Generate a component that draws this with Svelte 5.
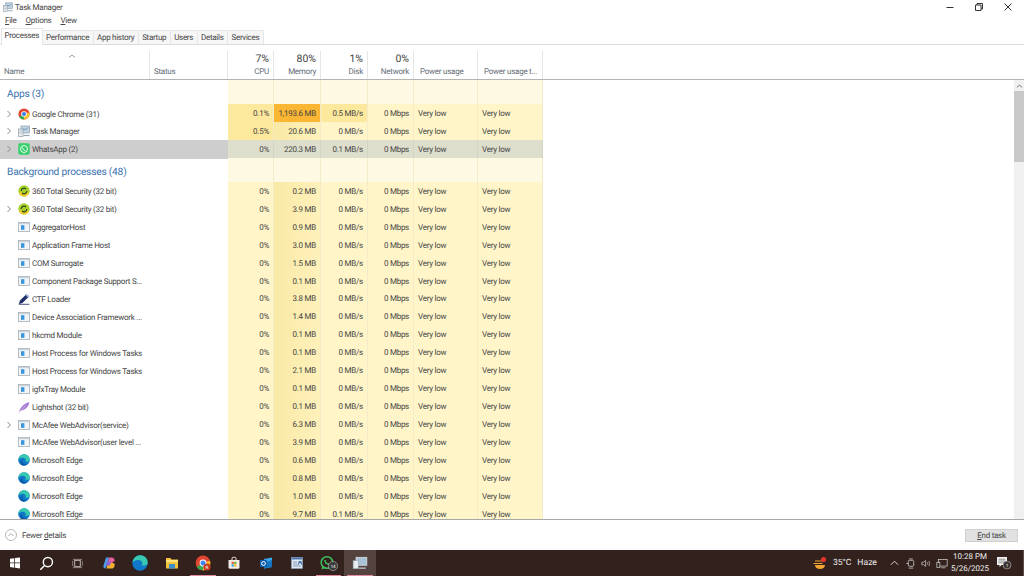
<script>
  const tabs = ["Processes", "Performance", "App history", "Startup", "Users", "Details", "Services"];

  const apps = [
    { name: "Google Chrome (31)", icon: "chrome", arrow: true, cpu: "0.1%", mem: "1,193.6 MB", disk: "0.5 MB/s", cpuHot: true, memHeat: "hot", diskHot: true },
    { name: "Task Manager", icon: "taskmgr", arrow: true, cpu: "0.5%", mem: "20.6 MB", disk: "0 MB/s", cpuHot: true },
    { name: "WhatsApp (2)", icon: "whatsapp", arrow: true, cpu: "0%", mem: "220.3 MB", disk: "0.1 MB/s", selected: true }
  ];

  const background = [
    { name: "360 Total Security (32 bit)", icon: "s360", mem: "0.2 MB" },
    { name: "360 Total Security (32 bit)", icon: "s360", arrow: true, mem: "3.9 MB" },
    { name: "AggregatorHost", icon: "win", mem: "0.9 MB" },
    { name: "Application Frame Host", icon: "win", mem: "3.0 MB" },
    { name: "COM Surrogate", icon: "win", mem: "1.5 MB" },
    { name: "Component Package Support S...", icon: "win", mem: "0.1 MB" },
    { name: "CTF Loader", icon: "ctf", mem: "3.8 MB" },
    { name: "Device Association Framework ...", icon: "win", mem: "1.4 MB" },
    { name: "hkcmd Module", icon: "win", mem: "0.1 MB" },
    { name: "Host Process for Windows Tasks", icon: "win", mem: "0.1 MB" },
    { name: "Host Process for Windows Tasks", icon: "win", mem: "2.1 MB" },
    { name: "igfxTray Module", icon: "win", mem: "0.1 MB" },
    { name: "Lightshot (32 bit)", icon: "lightshot", mem: "0.1 MB" },
    { name: "McAfee WebAdvisor(service)", icon: "win", arrow: true, mem: "6.3 MB" },
    { name: "McAfee WebAdvisor(user level ...", icon: "win", mem: "3.9 MB" },
    { name: "Microsoft Edge", icon: "edge", mem: "0.6 MB" },
    { name: "Microsoft Edge", icon: "edge", mem: "0.8 MB" },
    { name: "Microsoft Edge", icon: "edge", mem: "1.0 MB" },
    { name: "Microsoft Edge", icon: "edge", mem: "9.7 MB", disk: "0.1 MB/s" }
  ];
</script>

{#snippet rowIcon(kind)}
  <svg class="icon" viewBox="0 0 12 12">
    {#if kind === "chrome"}
      <circle cx="6" cy="6" r="5.6" fill="#e0452f" />
      <path d="M6 6 1.1 8.8A5.6 5.6 0 0 0 6 11.6L8.8 6.8Z" fill="#34a853" />
      <path d="M6 6 11.3 4.3A5.6 5.6 0 0 1 6 11.6Z" fill="#f6c22d" />
      <circle cx="6" cy="6" r="2.8" fill="#fff" />
      <circle cx="6" cy="6" r="2.1" fill="#3f7fe8" />
    {:else if kind === "taskmgr"}
      <rect x="3" y="1" width="8.5" height="7" fill="#c2d3e0" stroke="#8a9bab" stroke-width=".7" />
      <path d="M4 6 6 3.5 7.5 5 10 2.5" fill="none" stroke="#4f87b3" stroke-width=".8" />
      <rect x=".5" y="4" width="4.5" height="7.5" fill="#e8ecf0" stroke="#8f9ba5" stroke-width=".7" />
      <path d="M1.5 6h2.5M1.5 8h2.5" stroke="#8f9ba5" stroke-width=".6" />
      <path d="M5.5 10.5h6" stroke="#9aa5ae" stroke-width="1.2" />
    {:else if kind === "whatsapp"}
      <rect x=".3" y=".3" width="11.4" height="11.4" rx="1.6" fill="#35d06a" />
      <circle cx="6" cy="6" r="3.5" fill="none" stroke="#fff" stroke-width=".9" />
      <path d="M4.6 4.5c0 1.700 1.100 2.800 2.800 3" fill="none" stroke="#fff" stroke-width="1" />
    {:else if kind === "s360"}
      <circle cx="6" cy="6" r="5.7" fill="#a8cf2c" />
      <path d="M1 8A5.5 5.5 0 0 0 11 8.2L8 6.5 6 9.5 3.5 7Z" fill="#f4cc2f" />
      <path d="M3.2 6a2.8 2.8 0 0 1 4.800-2M8.800 6A2.8 2.8 0 0 1 4 8" fill="none" stroke="#26481c" stroke-width="1.1" />
    {:else if kind === "win"}
      <rect x=".4" y="1.4" width="11.2" height="9.2" fill="#f2f5f8" stroke="#a5aeb6" stroke-width=".8" />
      <rect x="1" y="2" width="10" height="1.2" fill="#c9d2da" />
      <rect x="3" y="4.2" width="3.4" height="4.6" fill="#3a96dc" />
    {:else if kind === "ctf"}
      <path d="M.8 11 2 7.6 8.6 1 11 3.4 4.4 10Z" fill="#1f2f6c" />
      <path d="M8.6 1 11 3.4 9.9 4.5 7.5 2.1Z" fill="#a9c3e6" />
      <path d="M.8 11.3h10.6" stroke="#1c2a5c" stroke-width=".8" />
    {:else if kind === "lightshot"}
      <path d="M1 11.500C2 6.500 5.500 2.500 11.400 1 10.800 6 7 9.300 3 9.500Z" fill="#a97fd8" />
      <path d="M1 11.500 7.600 4.600" stroke="#e6d9f4" stroke-width=".5" />
    {:else if kind === "edge"}
      <circle cx="6" cy="6" r="5.8" fill="#0f78c8" />
      <path d="M.4 5.400C1.200 2 3.600.2 6.200.2c3 0 5.500 2.200 5.600 5.400.1 1.400-1.100 2.200-2.600 2.200H7c.9-.6 1.100-1.700.4-2.700C6.100 3.400 2.900 3.300.4 5.400Z" fill="#37c9b0" />
      <path d="M4.200 6.800c0 2.200 2 3.900 4.800 3.400-1 1-2.500 1.600-3.800 1.400C3.300 11.300 1.900 9.700 2.100 7.900c.3-1 1.200-2 2.100-1.100Z" fill="#0d5ca8" />
    {/if}
  </svg>
{/snippet}

{#snippet row(r)}
  <div class="row" class:selected={r.selected}>
    <div class="name">
      <span class="arrow">{#if r.arrow}<svg viewBox="0 0 6 8"><path d="M1.500 1 4.500 4 1.500 7" fill="none" stroke="#8a8a8a" /></svg>{/if}</span>
      {@render rowIcon(r.icon)}
      <span class="label">{r.name}</span>
    </div>
    <div class="status"></div>
    <div class="cell num" class:warm={r.cpuHot}>{r.cpu ?? "0%"}</div>
    <div class="cell num mem" class:hot={r.memHeat === "hot"}>{r.mem}</div>
    <div class="cell num" class:warm={r.diskHot}>{r.disk ?? "0 MB/s"}</div>
    <div class="cell num">0 Mbps</div>
    <div class="cell text">Very low</div>
    <div class="cell text">Very low</div>
  </div>
{/snippet}

{#snippet groupRow(title)}
  <div class="row group">
    <div class="group-title">{title}</div>
    <div class="status"></div>
    <div class="cell"></div><div class="cell"></div><div class="cell"></div>
    <div class="cell"></div><div class="cell"></div><div class="cell"></div>
  </div>
{/snippet}

<div class="window">
  <div class="titlebar">
    <div class="title">{@render rowIcon("taskmgr")}<span>Task Manager</span></div>
    <div class="controls">
      <svg viewBox="0 0 10 10"><path d="M1.500 5.500h7" stroke="#333" /></svg>
      <svg viewBox="0 0 10 10"><path d="M1.500 3h5.500v5.500h-5.500zM3 3V1.500h5.500V7H7" fill="none" stroke="#333" /></svg>
      <svg viewBox="0 0 10 10"><path d="M1.500 1.500l7 7M8.500 1.500l-7 7" stroke="#333" /></svg>
    </div>
  </div>

  <div class="menu">
    <span><u>F</u>ile</span>
    <span><u>O</u>ptions</span>
    <span><u>V</u>iew</span>
  </div>

  <div class="tabs">
    {#each tabs as tab, i}
      <div class="tab" class:active={i === 0}>{tab}</div>
    {/each}
  </div>

  <div class="head">
    <div class="hcol name-col">
      <svg class="sort" viewBox="0 0 8 4"><path d="M1 3.500 4 1 7 3.500" fill="none" stroke="#999" /></svg>
      <span class="hlabel">Name</span>
    </div>
    <div class="hcol"><span class="hlabel">Status</span></div>
    <div class="hcol right"><span class="pct">7%</span><span class="hlabel">CPU</span></div>
    <div class="hcol right"><span class="pct">80%</span><span class="hlabel">Memory</span></div>
    <div class="hcol right"><span class="pct">1%</span><span class="hlabel">Disk</span></div>
    <div class="hcol right"><span class="pct">0%</span><span class="hlabel">Network</span></div>
    <div class="hcol power"><span class="hlabel">Power usage</span></div>
    <div class="hcol power"><span class="hlabel">Power usage t...</span></div>
  </div>

  <div class="body">
    <div class="rows">
      {@render groupRow("Apps (3)")}
      {#each apps as r}{@render row(r)}{/each}
      {@render groupRow("Background processes (48)")}
      {#each background as r}{@render row(r)}{/each}
    </div>
    <div class="scrollbar">
      <svg viewBox="0 0 8 4"><path d="M1 3.500 4 1 7 3.500" fill="none" stroke="#666" /></svg>
      <div class="thumb"></div>
    </div>
  </div>

  <div class="footer">
    <div class="fewer">
      <svg viewBox="0 0 12 12"><circle cx="6" cy="6" r="5.500" fill="none" stroke="#9a9a9a" stroke-width=".7" /><path d="M3.500 7 6 4.500 8.500 7" fill="none" stroke="#888" stroke-width=".7" /></svg>
      <span>Fewer <u>d</u>etails</span>
    </div>
    <div class="endtask"><u>E</u>nd task</div>
  </div>

  <div class="taskbar">
    <div class="tb-left">
      <div class="slot"><svg class="start" viewBox="0 0 12 12"><path d="M1 1.800 5.300 1.200V5.600H1ZM6 1.100 11 .4V5.600H6ZM1 6.300H5.300V10.700L1 10.100ZM6 6.300H11V11.500L6 10.800Z" fill="#fff" /></svg></div>
      <div class="slot"><svg class="search" viewBox="0 0 14 14"><circle cx="8.300" cy="5.700" r="4.300" fill="none" stroke="#fff" stroke-width="1.300" /><path d="M5.200 8.800 1.200 12.800" stroke="#fff" stroke-width="1.400" /></svg></div>
      <div class="slot"><svg class="view" viewBox="0 0 12 12"><rect x="3" y="2.500" width="6" height="7" fill="none" stroke="#d8d4d2" stroke-width=".9" /><path d="M1 1.500h10M1 10.500h10M.8 3v6M11.200 3v6" stroke="#a8a3a0" stroke-width=".8" /></svg></div>
      <div class="slot"><svg class="app" viewBox="0 0 14 14">
        <path d="M4 1.500h3L6 7 3.500 12.500C1.500 12.500 1 11 1.500 9.500Z" fill="#4b9be8" />
        <path d="M7 1.500h3c1.500 0 2.500 1.500 2.800 3L10 7H6Z" fill="#e85f9f" />
        <path d="M6 7h4.500l2 .5c.5 2.500-.5 5-2.500 5H6.500L4.500 12.500Z" fill="#f4b02e" />
        <path d="M5 5.500h4l-1 4H4Z" fill="#8f63d6" />
      </svg></div>
      <div class="slot"><svg class="app big" viewBox="0 0 12 12">
        <circle cx="6" cy="6" r="5.800" fill="#0f78c8" />
        <path d="M.4 5.400C1.200 2 3.600.2 6.200.2c3 0 5.500 2.200 5.600 5.400.1 1.400-1.100 2.200-2.600 2.200H7c.9-.6 1.100-1.700.4-2.700C6.100 3.400 2.900 3.300.4 5.400Z" fill="#37c9b0" />
      </svg></div>
      <div class="slot"><svg class="app" viewBox="0 0 14 14"><path d="M1 2h4.500l1 1.500H13v9H1Z" fill="#f3c33d" /><rect x="1" y="4" width="12" height="2" fill="#ffe37d" /><rect x="4" y="8" width="6" height="4.500" fill="#3b8fc9" /></svg></div>
      <div class="slot running">
        <svg class="app big" viewBox="0 0 16 16">
          <circle cx="8" cy="8" r="7.400" fill="#e0452f" />
          <path d="M8 8 1.700 11.800A7.400 7.400 0 0 0 8 15.400Z" fill="#34a853" />
          <path d="M8 8 15 5.800A7.400 7.400 0 0 1 8 15.400Z" fill="#f6c22d" />
          <circle cx="8" cy="8" r="3.400" fill="#fff" /><circle cx="8" cy="8" r="2.500" fill="#4285f4" />
          <circle cx="12" cy="12" r="3.600" fill="#c23a22" />
          <text x="12" y="13.700" class="tiny">R</text>
        </svg>
      </div>
      <div class="slot"><svg class="app" viewBox="0 0 14 14"><path d="M1.500 4H12.500V11.500C12.500 12.200 12 12.700 11.300 12.700H2.700C2 12.700 1.500 12.200 1.500 11.500Z" fill="#f0ece6" /><path d="M5 4V2.500C5 1.800 5.500 1.300 6.200 1.300H7.800C8.500 1.300 9 1.800 9 2.500V4" fill="none" stroke="#f0ece6" /><rect x="4.600" y="5.800" width="2.200" height="2.200" fill="#ea5b32" /><rect x="7.200" y="5.800" width="2.200" height="2.200" fill="#71b42c" /><rect x="4.600" y="8.400" width="2.200" height="2.200" fill="#2d9fe3" /><rect x="7.200" y="8.400" width="2.200" height="2.200" fill="#f9b81c" /></svg></div>
      <div class="slot"><svg class="app" viewBox="0 0 14 14"><path d="M5 3 13 1.500V11L5 12.500Z" fill="#35a7e8" /><path d="M5 7 13 4V11L5 12.500Z" fill="#1572c0" /><rect x="1" y="4" width="7" height="7" rx=".8" fill="#0f5fb0" /><circle cx="4.500" cy="7.500" r="1.900" fill="none" stroke="#fff" stroke-width="1" /></svg></div>
      <div class="slot"><svg class="app" viewBox="0 0 14 14"><rect x="1.500" y="1.500" width="11" height="11" fill="#dfe9f5" stroke="#8da5c4" stroke-width=".6" /><rect x="1.500" y="1.500" width="11" height="2" fill="#5178ad" /><path d="M3 6h4M3 8h4M3 10h8" stroke="#5e7ea8" stroke-width=".7" /><path d="M8 9 9.300 5 10 7.500 10.800 5 12 9" fill="none" stroke="#2d5a9a" stroke-width=".8" /></svg></div>
      <div class="slot running">
        <svg class="app wa" viewBox="0 0 18 16">
          <circle cx="7" cy="7.500" r="5.800" fill="none" stroke="#3cc25c" stroke-width="1.500" />
          <path d="M1.500 14.500 2.500 10.500 5 13Z" fill="#3cc25c" />
          <path d="M5 5c0 2.500 1.500 4 4 4.300" fill="none" stroke="#3cc25c" stroke-width="1.500" />
          <circle cx="13" cy="11" r="4.600" fill="#3b3a3a" stroke="#cfcfcf" stroke-width=".5" />
          <text x="13" y="13" class="tiny">14</text>
        </svg>
      </div>
      <div class="slot running current">
        <svg class="app big" viewBox="0 0 14 12"><rect x="3.500" y="1" width="9.500" height="7" fill="#a9c2d6" stroke="#dfe7ee" stroke-width=".6" /><rect x="1" y="4" width="4.500" height="7" fill="#e7ecf0" stroke="#9aa7b2" stroke-width=".5" /><path d="M6 10.500h6" stroke="#bcc6ce" stroke-width="1.200" /></svg>
      </div>
    </div>

    <div class="tray">
      <svg class="weather" viewBox="0 0 16 14"><path d="M3 5h8M1.500 7.500h9" stroke="#f2a431" stroke-width="1.200" /><path d="M3 9h10c0 2.500-2.200 4-5 4s-5-1.500-5-4Z" fill="#f2a431" /><circle cx="11.500" cy="3.500" r="2.600" fill="#e0342e" /></svg>
      <span class="temp">35°C</span>
      <span class="haze">Haze</span>
      <svg class="t-chev" viewBox="0 0 10 6"><path d="M1 5 5 1 9 5" fill="none" stroke="#e8e8e8" /></svg>
      <svg class="t-ico" viewBox="0 0 10 12"><rect x="2" y="2.500" width="6" height="6.500" rx="1.500" fill="none" stroke="#ddd" stroke-width=".8" /><path d="M3 1h4M2.500 11h5M0 6h2" stroke="#ddd" stroke-width=".8" /></svg>
      <svg class="t-ico" viewBox="0 0 12 12"><path d="M1 4.500h2L5.500 2.500V9.500L3 7.500H1Z" fill="none" stroke="#ddd" stroke-width=".8" /><path d="M7.500 4.500c.7 1 .7 2 0 3M9.300 3c1.300 2 1.300 4 0 6" fill="none" stroke="#ddd" stroke-width=".8" /></svg>
      <svg class="t-ico wide" viewBox="0 0 14 12"><rect x="3" y="1.500" width="10" height="7.500" fill="none" stroke="#ddd" stroke-width=".8" /><rect x="1" y="4.500" width="3.500" height="6" fill="#33211d" stroke="#ddd" stroke-width=".8" /><path d="M6 11h5" stroke="#ddd" stroke-width=".8" /></svg>
      <div class="clock"><span>10:28 PM</span><span>5/26/2025</span></div>
      <svg class="notif" viewBox="0 0 16 14"><path d="M1 1h10v8H5.500L3.500 11V9H1Z" fill="#f2f2f2" /><path d="M2.500 3.200h7M2.500 5h7M2.500 6.800h5" stroke="#555" stroke-width=".6" /><circle cx="11" cy="9" r="4" fill="#3d3532" stroke="#cfcfcf" stroke-width=".5" /><text x="11" y="11" class="tiny">1</text></svg>
    </div>
  </div>
</div>

<style>
  :global(body) {
    margin: 0;
    background: #fff;
  }

  .window {
    width: 1024px;
    height: 576px;
    display: flex;
    flex-direction: column;
    overflow: hidden;
    background: #fff;
    color: #454545;
    font-family: Roboto, "Liberation Sans", sans-serif;
    font-size: 8px;
    letter-spacing: -0.25px;
    text-rendering: geometricPrecision;
  }

  .titlebar {
    height: 14px;
    display: flex;
    justify-content: space-between;
    align-items: center;
  }

  .title {
    display: flex;
    align-items: center;
    gap: 2px;
    padding-left: 3px;
  }

  .title :global(.icon) {
    width: 10px;
    height: 10px;
    margin: 0;
  }

  .controls {
    display: flex;
    gap: 19px;
    padding-right: 11px;
  }

  .controls svg {
    width: 10px;
    height: 10px;
  }

  .menu {
    height: 13px;
    display: flex;
    align-items: center;
    gap: 9px;
    padding-left: 5px;
  }

  .tabs {
    height: 18px;
    display: flex;
    align-items: flex-end;
    padding-left: 1px;
    border-bottom: 1px solid #dcdcdc;
    box-sizing: border-box;
    letter-spacing: -0.3px;
  }

  .tab {
    height: 14px;
    line-height: 14px;
    padding: 0 3.5px;
    box-sizing: border-box;
    background: #f6f6f6;
    border: 1px solid #e6e6e6;
    border-left: 0;
    border-bottom: 0;
  }

  .tab.active {
    height: 17px;
    line-height: 13px;
    padding: 0 2.5px;
    background: #fff;
    margin-bottom: -1px;
    border-left: 1px solid #e6e6e6;
  }

  .head {
    height: 35px;
    box-sizing: border-box;
    padding-top: 6px;
    display: grid;
    grid-template-columns: 150px 78px 46px 47px 47px 46px 64px 65px;
    width: 543px;
    flex: none;
  }

  .hcol {
    display: flex;
    flex-direction: column;
    justify-content: flex-end;
    align-items: flex-start;
    padding: 0 4px 2px 4px;
    border-right: 1px solid #e6e6e6;
    position: relative;
    line-height: 12px;
    color: #5f6b76;
    white-space: nowrap;
  }

  .hcol.right {
    align-items: flex-end;
  }

  .hcol.power {
    padding-left: 6px;
  }

  .sort {
    position: absolute;
    left: 68px;
    top: 3px;
    width: 8px;
    height: 4px;
  }

  .pct {
    font-size: 10.5px;
    line-height: 15px;
    color: #444;
    letter-spacing: 0;
  }

  .body {
    flex: 1;
    min-height: 0;
    display: flex;
    border-top: 1px solid #b4b4b4;
    border-bottom: 1px solid #a8a8a8;
    margin-top: -1px;
    position: relative;
  }

  .rows {
    flex: 1;
    min-width: 0;
    overflow: hidden;
  }

  .row {
    height: 17.95px;
    display: grid;
    grid-template-columns: 150px 78px 46px 47px 47px 46px 64px 65px;
    align-items: stretch;
    line-height: 19px;
    width: 543px;
  }

  .row.group {
    height: 24px;
    line-height: 29px;
  }

  .group-title {
    padding-left: 7px;
    font-size: 10.2px;
    letter-spacing: -0.2px;
    color: #3b73b0;
    white-space: nowrap;
  }

  .name {
    display: flex;
    align-items: center;
    white-space: nowrap;
    overflow: hidden;
  }

  .label {
    margin-top: 1px;
  }

  .arrow {
    width: 18px;
    display: flex;
    justify-content: center;
    flex: none;
  }

  .arrow svg {
    width: 6px;
    height: 8px;
  }

  .icon {
    width: 12px;
    height: 12px;
    flex: none;
    margin-right: 2px;
  }

  .cell {
    background: #fff5c9;
    border-right: 1px solid #f4ecc8;
    padding: 0 4px;
    white-space: nowrap;
    box-sizing: border-box;
  }

  .group .cell {
    background: #fef9e3;
  }

  .num {
    text-align: right;
  }

  .mem {
    background: linear-gradient(90deg, #f9e9a6, #fff1bb);
  }

  .warm {
    background: #fde99d;
  }

  .hot {
    background: #fbb734;
  }

  .selected .name,
  .selected .status {
    background: #cecece;
  }

  .selected .cell {
    background: #dedecc;
    border-right-color: #d4d4c4;
  }

  .scrollbar {
    width: 10px;
    margin-left: auto;
    background: #f0f0f0;
    display: flex;
    flex-direction: column;
    align-items: center;
  }

  .scrollbar svg {
    width: 7px;
    height: 4px;
    margin: 4px 0 3px;
  }

  .thumb {
    width: 100%;
    height: 71px;
    background: #c8c8c8;
  }

  .footer {
    height: 30px;
    flex: none;
    display: flex;
    justify-content: space-between;
    align-items: center;
    padding: 0 6px 0 5px;
  }

  .fewer {
    display: flex;
    align-items: center;
    gap: 5px;
  }

  .fewer svg {
    width: 12px;
    height: 12px;
  }

  .endtask {
    width: 53px;
    height: 13px;
    line-height: 12px;
    text-align: center;
    background: #e1e1e1;
    border: 1px solid #cfcfcf;
    box-sizing: border-box;
  }

  .taskbar {
    height: 26px;
    flex: none;
    display: flex;
    justify-content: space-between;
    align-items: center;
    background: #33211d;
    color: #eee;
    border-right: 1px solid #5c4f4b;
    letter-spacing: 0;
  }

  .tb-left {
    display: flex;
    align-items: center;
    height: 100%;
    margin-left: -1px;
  }

  .slot {
    width: 31.4px;
    height: 100%;
    display: flex;
    align-items: center;
    justify-content: center;
    position: relative;
  }

  .running::after {
    content: "";
    position: absolute;
    left: 3px;
    right: 3px;
    bottom: 0;
    height: 1.5px;
    background: #e58aa3;
  }

  .current {
    background: #54433f;
  }

  .start { width: 12px; height: 12px; }
  .search { width: 15px; height: 15px; }
  .view { width: 11px; height: 11px; }
  .app { width: 14px; height: 14px; }
  .app.big { width: 16px; height: 16px; }
  .app.wa { width: 18px; height: 16px; }

  .tiny {
    fill: #fff;
    font-size: 4.5px;
    text-anchor: middle;
  }

  .tray {
    display: flex;
    align-items: center;
    height: 100%;
    padding-right: 11px;
    font-size: 8.6px;
  }

  .weather {
    width: 16px;
    height: 14px;
    margin-right: 5px;
  }

  .temp {
    margin-right: 6px;
  }

  .haze {
    margin-right: 13px;
  }

  .t-chev {
    width: 9px;
    height: 6px;
    margin-right: 7px;
  }

  .t-ico {
    width: 10px;
    height: 11px;
    margin-right: 5px;
  }

  .t-ico.wide {
    width: 12px;
    margin-right: 3px;
  }

  .clock {
    display: flex;
    flex-direction: column;
    align-items: center;
    line-height: 12px;
    font-size: 8px;
    margin-right: 7px;
  }

  .notif {
    width: 16px;
    height: 14px;
  }
</style>
